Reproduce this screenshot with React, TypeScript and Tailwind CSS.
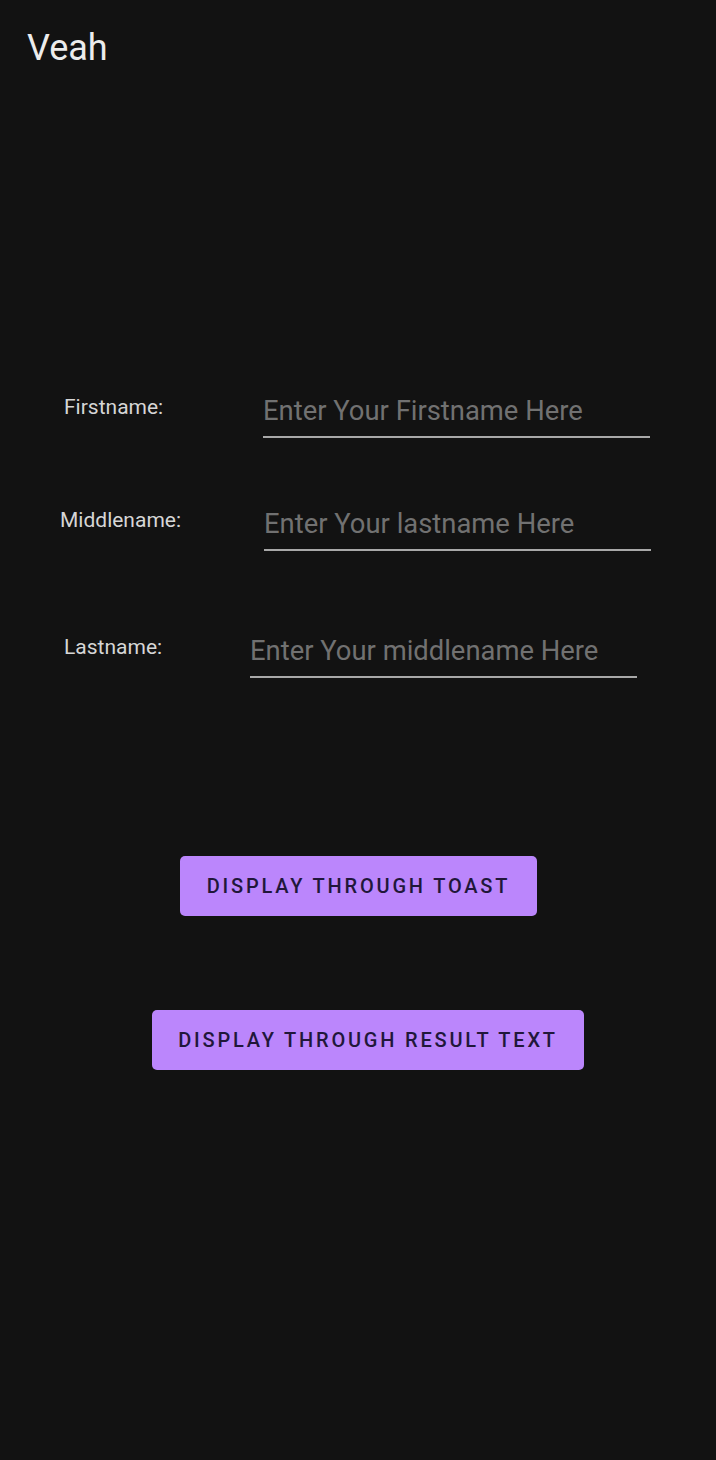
import React from "react";

export default function App() {
  return (
    <div
      className="w-[716px] h-[1460px] bg-[#121212] flex flex-col"
      style={{ fontFamily: "Roboto, 'Noto Sans', sans-serif" }}
    >
      <div className="pl-[27px] pt-[28px] text-[36px] leading-[40px] text-[#ececec]">Veah</div>

      <div className="mt-[327px]">
        <div className="flex items-start">
          <div className="ml-[64px] w-[120px] shrink-0 text-[21px] leading-[25px] text-[#d6d6d6]">Firstname:</div>
          <div className="ml-[79px] w-[387px] shrink-0 border-b-2 border-[#a8a8a8] pb-[9px]">
            <input readOnly placeholder="Enter Your Firstname Here" className="block w-full bg-transparent text-[27.4px] leading-[32px] h-[32px] text-[#e0e0e0] placeholder:text-[#717171] outline-none" />
          </div>
        </div>

        <div className="flex items-start mt-[70px]">
          <div className="ml-[60px] w-[124px] shrink-0 text-[21px] leading-[25px] text-[#d6d6d6]">Middlename:</div>
          <div className="ml-[80px] w-[387px] shrink-0 border-b-2 border-[#a8a8a8] pb-[9px]">
            <input readOnly placeholder="Enter Your lastname Here" className="block w-full bg-transparent text-[27.4px] leading-[32px] h-[32px] text-[#e0e0e0] placeholder:text-[#717171] outline-none" />
          </div>
        </div>

        <div className="flex items-start mt-[84px]">
          <div className="ml-[64px] w-[120px] shrink-0 text-[21px] leading-[25px] text-[#d6d6d6]">Lastname:</div>
          <div className="ml-[66px] w-[387px] shrink-0 border-b-2 border-[#a8a8a8] pb-[9px]">
            <input readOnly placeholder="Enter Your middlename Here" className="block w-full bg-transparent text-[27.4px] leading-[32px] h-[32px] text-[#e0e0e0] placeholder:text-[#717171] outline-none" />
          </div>
        </div>
      </div>

      <div className="mt-[178px] flex flex-col">
        <div className="ml-[180px] w-[357px] h-[60px] rounded-[5px] bg-[#bb86fc] flex items-center justify-center text-[20px] font-medium tracking-[0.14em] text-[#21173a]">
          DISPLAY THROUGH TOAST
        </div>
        <div className="ml-[152px] mt-[94px] w-[432px] h-[60px] rounded-[5px] bg-[#bb86fc] flex items-center justify-center text-[20px] font-medium tracking-[0.14em] text-[#21173a]">
          DISPLAY THROUGH RESULT TEXT
        </div>
      </div>
    </div>
  );
}
